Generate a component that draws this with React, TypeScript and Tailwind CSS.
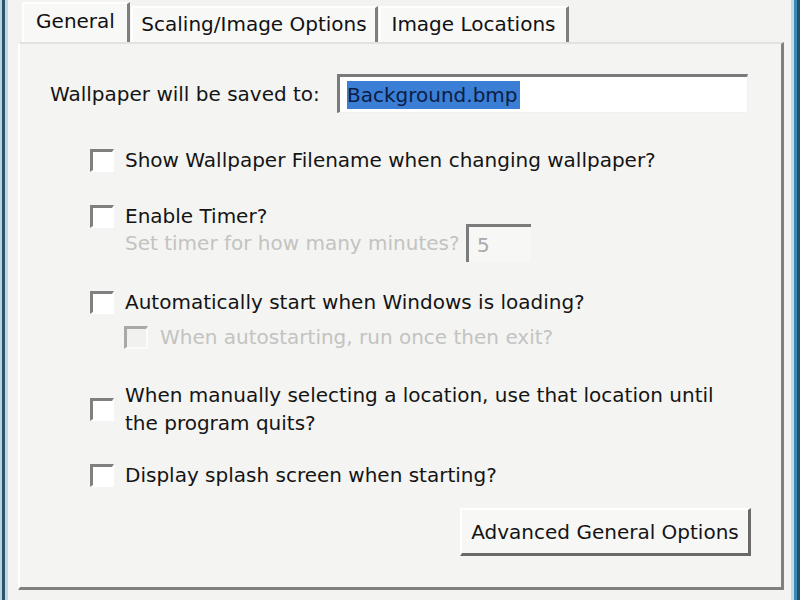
import React from "react";

const font = { fontFamily: '"DejaVu Sans", "Liberation Sans", sans-serif' };

function Check({ disabled = false }: { disabled?: boolean }) {
  return (
    <div
      className={
        disabled
          ? "w-[24px] h-[23px] shrink-0 border-t-[3px] border-l-[3px] border-b-2 border-r-2 border-t-[#a9a9a9] border-l-[#a9a9a9] border-b-[#fbfbfb] border-r-[#fbfbfb] bg-[#f1f1ef]"
          : "w-[24px] h-[23px] shrink-0 border-t-[3px] border-l-[3px] border-b-2 border-r-2 border-t-[#808080] border-l-[#808080] border-b-white border-r-white bg-white"
      }
    />
  );
}

function Tab({ label, w, selected = false }: { label: string; w: string; selected?: boolean }) {
  return (
    <div
      className={
        (selected ? "h-[40px] pb-[4px] " : "h-[36px] pb-[2px] ") +
        w +
        " flex items-center justify-center bg-[#f8f8f7] border-l-2 border-l-white border-t-2 border-t-white border-r-[3px] border-r-[#7e7e7e] text-[20px] text-[#111]"
      }
    >
      {label}
    </div>
  );
}

export default function App() {
  return (
    <div className="w-[800px] h-[600px] flex bg-[#f3f3f1] overflow-hidden" style={font}>
      <div className="w-[2px] h-full bg-[#b7d4e4]" />
      <div className="w-[3px] h-full bg-[#2c5466]" />
      <div className="w-[3px] h-full bg-[#bcd9e8]" />
      <div className="flex-1 flex flex-col pl-[10px] pr-[7px]">
        <div className="h-[42px] flex items-end pl-[4px] gap-[1px]">
          <Tab label="General" w="w-[108px]" selected />
          <Tab label="Scaling/Image Options" w="w-[247px]" />
          <Tab label="Image Locations" w="w-[190px]" />
        </div>
        <div className="h-[548px] flex flex-col bg-[#f4f4f2] border-t-2 border-l-2 border-t-[#e2e2e0] border-l-white border-r-[3px] border-b-[3px] border-r-[#808080] border-b-[#808080] pt-[30px] text-[20px] leading-[24px] text-[#141414]">
          <div className="flex items-center pl-[30px]">
            <div className="w-[287px]">Wallpaper will be saved to:</div>
            <div className="w-[411px] h-[39px] flex items-center pl-[7px] bg-white border-t-[3px] border-l-[3px] border-t-[#7a7a7a] border-l-[#7a7a7a] border-b border-r border-b-[#f0f0f0] border-r-[#f0f0f0]">
              <span className="bg-[#3a7ed6] text-[#0c1d44] h-[28px] leading-[28px] pr-[2px]">Background.bmp</span>
            </div>
          </div>

          <div className="mt-[35px] flex items-center pl-[70px] gap-[11px]">
            <Check />
            <span>Show Wallpaper Filename when changing wallpaper?</span>
          </div>

          <div className="mt-[32px] flex items-center pl-[70px] gap-[11px]">
            <Check />
            <span>Enable Timer?</span>
          </div>
          <div className="mt-[-4px] h-[38px] flex items-center pl-[105px]">
            <span className="text-[#c3c3c1] w-[341px]">Set timer for how many minutes?</span>
            <div className="w-[65px] h-[38px] flex items-center pl-[8px] bg-[#f7f7f6] border-t-[3px] border-l-[3px] border-t-[#7c7c7c] border-l-[#7c7c7c] text-[#a9a9a9]">
              5
            </div>
          </div>

          <div className="mt-[28px] flex items-center pl-[70px] gap-[11px]">
            <Check />
            <span>Automatically start when Windows is loading?</span>
          </div>
          <div className="mt-[11px] flex items-center pl-[104px] gap-[12px]">
            <Check disabled />
            <span className="text-[#c3c3c1]">When autostarting, run once then exit?</span>
          </div>

          <div className="mt-[32px] flex items-center pl-[70px] gap-[11px]">
            <Check />
            <span className="leading-[28px]">
              When manually selecting a location, use that location until
              <br />
              the program quits?
            </span>
          </div>

          <div className="mt-[26px] flex items-center pl-[70px] gap-[11px]">
            <Check />
            <span>Display splash screen when starting?</span>
          </div>

          <div className="mt-[21px] self-end mr-[30px] w-[291px] h-[48px] flex items-center justify-center bg-[#f7f7f6] border-t-2 border-l-2 border-t-white border-l-white border-r-[3px] border-b-[3px] border-r-[#6a6a6a] border-b-[#6a6a6a]">
            Advanced General Options
          </div>
        </div>
      </div>
      <div className="w-[3px] h-full bg-[#bfdcec]" />
      <div className="w-[3px] h-full bg-[#3b8ab3]" />
      <div className="w-[3px] h-full bg-[#24506a]" />
    </div>
  );
}
